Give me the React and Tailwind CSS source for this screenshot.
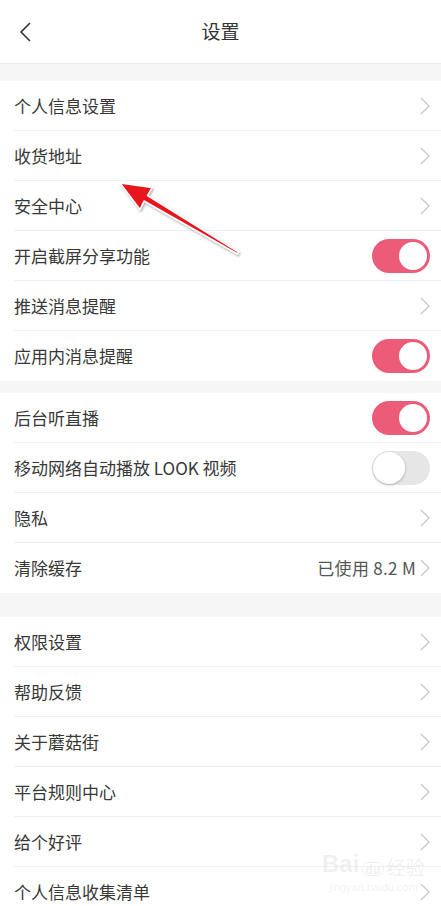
import React from 'react';

const sections = [
  [
    { label: '个人信息设置', type: 'link' },
    { label: '收货地址', type: 'link' },
    { label: '安全中心', type: 'link' },
    { label: '开启截屏分享功能', type: 'toggle', on: true },
    { label: '推送消息提醒', type: 'link' },
    { label: '应用内消息提醒', type: 'toggle', on: true },
  ],
  [
    { label: '后台听直播', type: 'toggle', on: true },
    { label: '移动网络自动播放 LOOK 视频', type: 'toggle', on: false },
    { label: '隐私', type: 'link' },
    { label: '清除缓存', type: 'link', value: '已使用 8.2 M' },
  ],
  [
    { label: '权限设置', type: 'link' },
    { label: '帮助反馈', type: 'link' },
    { label: '关于蘑菇街', type: 'link' },
    { label: '平台规则中心', type: 'link' },
    { label: '给个好评', type: 'link' },
    { label: '个人信息收集清单', type: 'link' },
  ],
];

const Chevron = () => (
  <svg width="10" height="18" viewBox="0 0 10 18" fill="none" className="shrink-0">
    <path d="M1 1l8 8-8 8" stroke="#c8c8c8" strokeWidth="1.2" />
  </svg>
);

const Toggle = ({ on }) =>
  on ? (
    <div className="w-[58px] h-[34px] rounded-full bg-[#ec5c79] flex items-center justify-end pr-[1px]">
      <div className="w-[32px] h-[32px] rounded-full bg-white border-2 border-[#ec5c79]" />
    </div>
  ) : (
    <div className="w-[58px] h-[34px] rounded-full bg-[#e6e6e6] flex items-center pl-[1px]">
      <div className="w-[32px] h-[32px] rounded-full bg-white shadow-[0_1px_3px_rgba(0,0,0,0.25)]" />
    </div>
  );

const Row = ({ item, last }) => (
  <div className="pl-[14px]">
    <div
      className={`h-[50px] flex items-center pr-[11px] ${
        last ? '' : 'border-b border-[#efefef]'
      }`}
    >
      <span className="flex-1 text-[17px] text-[#383838]">{item.label}</span>
      {item.value && (
        <span className="text-[17px] text-[#555] mr-[4px] tracking-[0.3px]">{item.value}</span>
      )}
      {item.type === 'toggle' ? <Toggle on={item.on} /> : <Chevron />}
    </div>
  </div>
);

export default function App() {
  return (
    <div
      className="relative w-[441px] h-[906px] overflow-hidden bg-[#f6f6f6]"
      style={{ fontFamily: '"Noto Sans CJK SC", "Noto Sans", sans-serif' }}
    >
      <div className="h-[64px] bg-white border-b border-[#e8e8e8] flex items-center relative">
        <svg width="14" height="22" viewBox="0 0 14 22" fill="none" className="ml-[18px]">
          <path d="M12 2L3 11l9 9" stroke="#333" strokeWidth="1.6" />
        </svg>
        <div className="absolute inset-0 flex items-center justify-center text-[19px] text-[#333]">
          设置
        </div>
      </div>

      <div className="mt-[17px] bg-white">
        {sections[0].map((it, i) => (
          <Row key={it.label} item={it} last={i === sections[0].length - 1} />
        ))}
      </div>
      <div className="mt-[12px] bg-white">
        {sections[1].map((it, i) => (
          <Row key={it.label} item={it} last={i === sections[1].length - 1} />
        ))}
      </div>
      <div className="mt-[24px] bg-white">
        {sections[2].map((it, i) => (
          <Row key={it.label} item={it} last={i === sections[2].length - 1} />
        ))}
      </div>

      <svg className="absolute left-0 top-0 pointer-events-none" width="441" height="906">
        <defs>
          <filter id="sh" x="-20%" y="-20%" width="140%" height="140%">
            <feDropShadow dx="1" dy="1.5" stdDeviation="1.2" floodColor="#000" floodOpacity="0.35" />
          </filter>
        </defs>
        <polygon
          points="120,183 152,187.5 147.5,195.5 238.5,252 237.5,254 144,201 140,209.5"
          fill="#e8121c"
          stroke="#fff"
          strokeWidth="1.5"
          strokeLinejoin="round"
          filter="url(#sh)"
        />
      </svg>

      <div className="absolute left-[322px] top-[852px] flex flex-col items-center pointer-events-none opacity-40 whitespace-nowrap">
        <div className="flex items-end gap-[3px] text-[#dcdcdc] leading-none">
          <span className="text-[24px] font-bold" style={{ fontFamily: '"Liberation Sans", sans-serif' }}>
            Bai
          </span>
          <span className="text-[12px] font-bold border border-[#dcdcdc] rounded-[6px] px-[2px]">du</span>
          <span className="text-[19px]">经验</span>
        </div>
        <span className="text-[11px] text-[#dcdcdc] mt-[3px]" style={{ fontFamily: '"Liberation Sans", sans-serif' }}>
          jingyan.baidu.com
        </span>
      </div>
    </div>
  );
}
